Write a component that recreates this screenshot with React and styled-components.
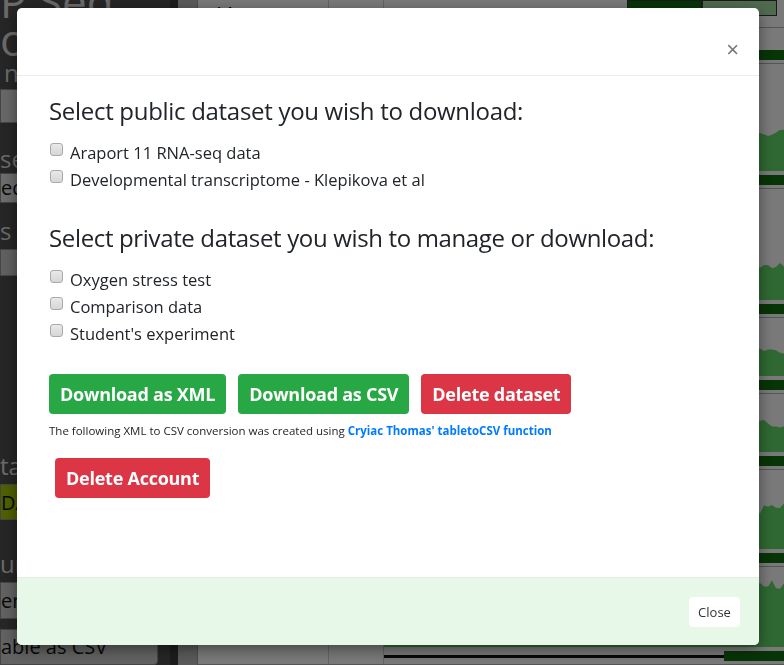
import styled, { createGlobalStyle } from 'styled-components'

const GlobalStyle = createGlobalStyle`
  html, body {
    margin: 0;
    padding: 0;
    height: 100%;
    overflow: hidden;
  }
  body {
    font-family: "Open Sans", "Noto Sans", sans-serif;
    color: #212529;
  }
`

/* ---------- page behind the modal ---------- */

const Page = styled.div`
  display: flex;
  width: 784px;
  height: 665px;
  overflow: hidden;
  background: #f2f2f2;
`

const Sidebar = styled.aside`
  width: 170px;
  flex-shrink: 0;
  background: #4c4c4c;
  display: flex;
  flex-direction: column;
  overflow: hidden;
`

const SideText = styled.div`
  color: #d4d4d4;
  font-size: ${p => p.$size || 24}px;
  line-height: ${p => p.$lh || 28}px;
  margin-top: ${p => p.$mt || 0}px;
  padding-left: ${p => p.$pl || 0}px;
  white-space: nowrap;
`

const SideBox = styled.div`
  height: ${p => p.$h || 36}px;
  margin-top: ${p => p.$mt || 0}px;
  width: ${p => p.$w || 170}px;
  background: ${p => p.$bg || '#bdbdbd'};
  border: 1px solid #8a8a8a;
  border-radius: 0 4px 4px 0;
  color: #111;
  font-size: 20px;
  display: flex;
  align-items: center;
  white-space: nowrap;
  box-sizing: border-box;
`

const Main = styled.div`
  flex: 1;
  display: flex;
  overflow: hidden;
`

const Gutter = styled.div`
  width: 8px;
  background: #3a3a3a;
`

const RowNums = styled.div`
  width: 19px;
  background: #b4b4b4;
  border-right: 1px solid #999;
`

const Table = styled.div`
  flex: 1;
  display: flex;
  flex-direction: column;
`

const TableRow = styled.div`
  display: grid;
  grid-template-columns: 131px 55px 1fr;
  height: ${p => p.$h}px;
  border-bottom: 1px solid #aaa;
  box-sizing: border-box;
`

const Cell = styled.div`
  border-right: 1px solid #c8c8c8;
  padding: 6px 10px;
  font-size: 15px;
  color: #111;
  overflow: hidden;
  white-space: nowrap;
`

const HeadCell = styled(Cell)`
  font-weight: 700;
  padding-top: 2px;
`

const ChartCell = styled.div`
  display: flex;
  flex-direction: column;
  justify-content: flex-end;
  padding-bottom: 6px;
  overflow: hidden;
`

const LegendRow = styled.div`
  display: flex;
  justify-content: flex-end;
  align-self: stretch;
  margin-bottom: auto;
  padding-right: 7px;
`

const LegendBox = styled.div`
  width: ${p => p.$w}px;
  height: 16px;
  background: ${p => p.$bg};
  border: 1px solid #333;
  box-sizing: border-box;
`

const GeneBar = styled.div`
  height: 3px;
  margin-top: 8px;
  background: #111;
  position: relative;
  &::after {
    content: '';
    position: absolute;
    right: 0;
    top: -4px;
    width: 60px;
    height: 10px;
    background: #0e6a0e;
  }
`

function Chart({ seed, height }) {
  let s = seed
  const rnd = () => {
    s = (s * 9301 + 49297) % 233280
    return s / 233280
  }
  const width = 400
  const pts = [`0,${height}`]
  let v = 0.4
  for (let x = 0; x <= width; x += 4) {
    const target = x > 330 ? 0.85 : 0.45
    v += (rnd() - 0.5) * 0.2 + (target - v) * 0.15
    if (rnd() < 0.03 && x < 330) v = 0.05
    v = Math.max(0.02, Math.min(0.98, v))
    pts.push(`${x},${(height * (1 - v)).toFixed(1)}`)
  }
  pts.push(`${width},${height}`)
  return (
    <svg width="100%" height={height} viewBox={`0 0 ${width} ${height}`} preserveAspectRatio="none">
      <polygon points={pts.join(' ')} fill="#5ed066" />
    </svg>
  )
}

const rows = [
  { h: 37, title: '', chart: 0 },
  { h: 128, title: '', chart: 42 },
  { h: 132, title: '', chart: 40 },
  { h: 78, title: '', chart: 28 },
  { h: 77, title: '', chart: 40 },
  { h: 100, title: '', chart: 64 },
  { h: 100, title: 'grown plant', chart: 70 },
]

function Background() {
  return (
    <Page>
      <Sidebar>
        <SideText $size={44} $lh={40} $mt={-19}>P Seq</SideText>
        <SideText $size={44} $lh={40} $mt={-2}>o</SideText>
        <SideText $pl={4}>n</SideText>
        <SideBox $mt={2} $h={37} $bg="#cfcfcf" />
        <SideText $mt={22}>se</SideText>
        <SideBox $h={33} $bg="#d8d8d8">eq</SideBox>
        <SideText $mt={14}>s</SideText>
        <SideBox $mt={4} $h={30} $bg="#c0c0c0" />
        <SideText $mt={176}>ta</SideText>
        <SideBox $mt={4} $h={40} $bg="#9ec000">DA</SideBox>
        <SideText $mt={30}>ur</SideText>
        <SideBox $mt={4} $h={40} $bg="#c4c4c4">erv</SideBox>
        <SideBox $mt={10} $h={40} $w={158} $bg="#c4c4c4">able as CSV</SideBox>
      </Sidebar>
      <Main>
        <Gutter />
        <RowNums />
        <Table>
          <TableRow $h={28}>
            <HeadCell>Title</HeadCell>
            <HeadCell>RNA-Seq Sample</HeadCell>
            <ChartCell>
              <LegendRow>
                <LegendBox $w={75} $bg="#0e6a0e" />
                <LegendBox $w={75} $bg="#9fd69f" />
              </LegendRow>
            </ChartCell>
          </TableRow>
          {rows.map((r, i) => (
            <TableRow key={i} $h={r.h}>
              <Cell>{r.title}</Cell>
              <Cell />
              <ChartCell>
                {r.chart > 0 && <Chart seed={i * 37 + 11} height={r.chart} />}
                <GeneBar />
              </ChartCell>
            </TableRow>
          ))}
        </Table>
      </Main>
    </Page>
  )
}

/* ---------- modal ---------- */

const Backdrop = styled.div`
  position: fixed;
  inset: 0;
  background: rgba(0, 0, 0, 0.5);
`

const ModalLayer = styled.div`
  position: fixed;
  inset: 0;
  padding: 8px 0 0 17px;
`

const Dialog = styled.div`
  width: 742px;
  height: 637px;
  background: #fff;
  border-radius: 5px;
  box-shadow: 0 4px 14px rgba(0, 0, 0, 0.45);
  display: flex;
  flex-direction: column;
  overflow: hidden;
`

const Header = styled.div`
  height: 68px;
  border-bottom: 1px solid #e9ecef;
  display: flex;
  justify-content: flex-end;
  align-items: flex-end;
  padding: 0 20px 14px 0;
  box-sizing: border-box;
`

const CloseX = styled.button`
  border: 0;
  background: none;
  padding: 0;
  font-family: "Liberation Sans", sans-serif;
  font-size: 22px;
  line-height: 22px;
  color: #777;
  cursor: pointer;
`

const Body = styled.div`
  flex: 1;
  padding: 20px 32px 0 32px;
`

const Heading = styled.h4`
  margin: 0 0 13px;
  font-size: 24px;
  font-weight: 400;
  line-height: 30px;
  color: #212529;
  letter-spacing: ${p => p.$ls || -0.3}px;
`

const CheckList = styled.div`
  display: flex;
  flex-direction: column;
  margin-bottom: ${p => p.$mb || 0}px;
`

const CheckLabel = styled.label`
  display: flex;
  align-items: center;
  gap: 7px;
  height: 27px;
  font-size: 16.5px;
  color: #212529;
`

const Box = styled.input`
  appearance: none;
  margin: 0 0 0 1px;
  width: 13px;
  height: 13px;
  border: 1px solid #a9a9a9;
  border-radius: 3px;
  background: linear-gradient(#e9e9e9, #d6d6d6);
  position: relative;
  top: -3px;
  flex-shrink: 0;
`

const ButtonRow = styled.div`
  display: flex;
  gap: 12px;
`

const Button = styled.button`
  border: 0;
  border-radius: 4px;
  height: 40px;
  padding: 0 11px;
  font-family: "Open Sans", sans-serif;
  font-size: 18px;
  font-weight: 700;
  letter-spacing: -0.25px;
  color: #fff;
  background: ${p => (p.$variant === 'danger' ? '#dc3545' : '#28a745')};
  margin-left: ${p => p.$ml || 0}px;
  cursor: pointer;
`

const Note = styled.p`
  margin: 9px 0 20px;
  font-size: 11.5px;
  color: #212529;
`

const NoteLink = styled.a`
  color: #007bff;
  font-weight: 700;
  text-decoration: none;
`

const Footer = styled.div`
  height: 68px;
  background: #e8f8e8;
  border-top: 1px solid #e3ebe3;
  display: flex;
  justify-content: flex-end;
  align-items: center;
  padding-right: 19px;
  box-sizing: border-box;
`

const FooterButton = styled.button`
  width: 51px;
  height: 30px;
  border: 0;
  border-radius: 4px;
  background: #fff;
  font-family: "Open Sans", sans-serif;
  font-size: 13px;
  color: #333;
  cursor: pointer;
`

const publicSets = ['Araport 11 RNA-seq data', 'Developmental transcriptome - Klepikova et al']
const privateSets = ['Oxygen stress test', 'Comparison data', "Student's experiment"]

export default function App() {
  return (
    <>
      <GlobalStyle />
      <Background />
      <Backdrop />
      <ModalLayer>
        <Dialog>
          <Header>
            <CloseX aria-label="Close">×</CloseX>
          </Header>
          <Body>
            <Heading $ls={-0.3}>Select public dataset you wish to download:</Heading>
            <CheckList $mb={30}>
              {publicSets.map(name => (
                <CheckLabel key={name}>
                  <Box type="checkbox" />
                  {name}
                </CheckLabel>
              ))}
            </CheckList>
            <Heading $ls={-0.35}>Select private dataset you wish to manage or download:</Heading>
            <CheckList $mb={27}>
              {privateSets.map(name => (
                <CheckLabel key={name}>
                  <Box type="checkbox" />
                  {name}
                </CheckLabel>
              ))}
            </CheckList>
            <ButtonRow>
              <Button>Download as XML</Button>
              <Button>Download as CSV</Button>
              <Button $variant="danger">Delete dataset</Button>
            </ButtonRow>
            <Note>
              The following XML to CSV conversion was created using{' '}
              <NoteLink href="#">Cryiac Thomas' tabletoCSV function</NoteLink>
            </Note>
            <Button $variant="danger" $ml={6}>Delete Account</Button>
          </Body>
          <Footer>
            <FooterButton>Close</FooterButton>
          </Footer>
        </Dialog>
      </ModalLayer>
    </>
  )
}
